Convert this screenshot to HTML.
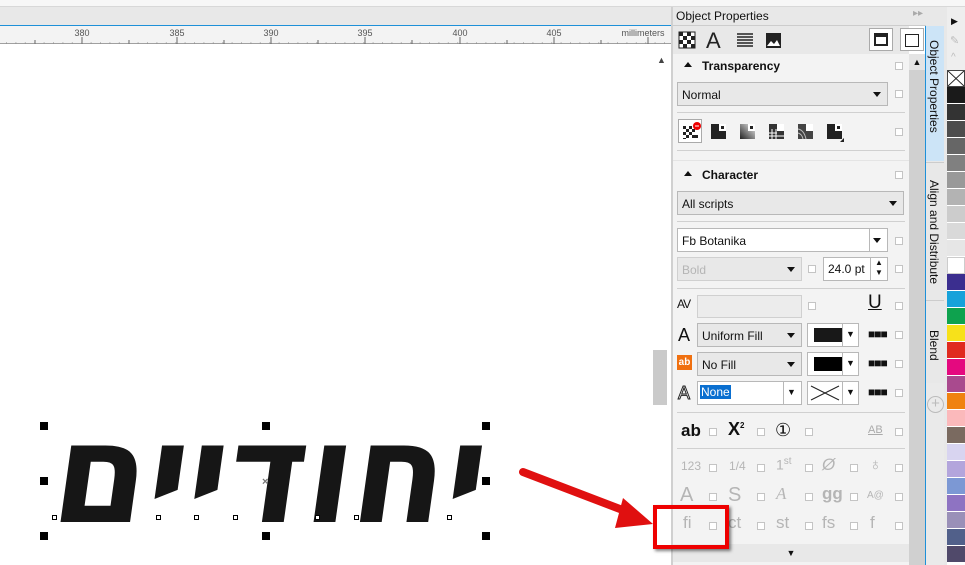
<!DOCTYPE html>
<html><head><meta charset="utf-8"><style>
*{margin:0;padding:0;box-sizing:border-box}
body{width:965px;height:565px;overflow:hidden;background:#fff;font-family:"Liberation Sans",sans-serif;position:relative;font-size:12px;color:#111}
.a{position:absolute}
.dd{position:absolute;background:#e8e8e8;border:1px solid #b8b8b8;font-size:12px;padding:5px 4px 0}
.dd:after{content:"";position:absolute;right:6px;top:9px;border:4px solid transparent;border-top:5px solid #111}
.cb{position:absolute;width:8px;height:8px;border:1px solid #c4c4c4;background:#fff}
.sep{position:absolute;left:677px;width:228px;height:1px;background:#d0d0d0}
.hdr{position:absolute;left:684px;font-weight:bold;font-size:12px}
.hdr:before{content:"";display:inline-block;border:4px solid transparent;border-bottom:5px solid #111;margin-right:10px;vertical-align:3px}
.g{position:absolute;color:#b5b5b5;font-size:17px}
.sw{position:absolute;left:947px;width:18px;height:17px;border-bottom:1px solid #fff}
.h{position:absolute;width:8px;height:8px;background:#000}
.s{position:absolute;width:5px;height:5px;border:1px solid #000;background:#fff}
</style></head><body>
<div class="a" style="left:0;top:0;width:965px;height:7px;background:#f7f7f7;border-bottom:1px solid #d8d8d8"></div>
<div class="a" style="left:0;top:7px;width:672px;height:19px;background:#e8e8e8;border-bottom:1px solid #1e90d8"></div>
<div class="a" style="left:0;top:26px;width:672px;height:18px;background:#f3f3f3;border-bottom:1px solid #a0a0a0"></div>
<svg class="a" style="left:0;top:26px" width="672" height="18">
<g fill="#555" font-size="9" font-family="Liberation Sans" text-anchor="middle">
<text x="82" y="10">380</text><text x="177" y="10">385</text><text x="271" y="10">390</text><text x="365" y="10">395</text><text x="460" y="10">400</text><text x="554" y="10">405</text>
<text x="643" y="10">millimeters</text></g>
<g stroke="#666">
<path d="M82 11V18M177 11V18M271 11V18M365 11V18M460 11V18M554 11V18M648 11V18M35 14V18M129 14V18M224 14V18M318 14V18M412 14V18M507 14V18M601 14V18"/></g>
<g stroke="#888" stroke-dasharray="1 8.4"><path d="M6 17H672"/></g>
</svg>
<div class="a" style="left:653px;top:350px;width:14px;height:55px;background:#cacaca"></div>
<div class="a" style="left:657px;top:55px;font-size:9px;color:#444">▲</div>
<div class="a" style="left:671px;top:7px;width:2px;height:558px;background:#d0d0d0"></div>
<svg class="a" style="left:0;top:410px" width="500" height="150">
<text x="50" y="112" textLength="432" lengthAdjust="spacingAndGlyphs" font-size="140" font-weight="bold" font-family="DejaVu Sans, sans-serif" fill="#161616" transform="skewX(-8) translate(14 0)">יחודיים</text>
</svg>
<div class="h" style="left:40px;top:422px"></div><div class="h" style="left:262px;top:422px"></div><div class="h" style="left:482px;top:422px"></div>
<div class="h" style="left:40px;top:477px"></div><div class="h" style="left:482px;top:477px"></div>
<div class="h" style="left:40px;top:532px"></div><div class="h" style="left:262px;top:532px"></div><div class="h" style="left:482px;top:532px"></div>
<div class="s" style="left:52px;top:515px"></div><div class="s" style="left:156px;top:515px"></div><div class="s" style="left:194px;top:515px"></div><div class="s" style="left:233px;top:515px"></div><div class="s" style="left:315px;top:515px"></div><div class="s" style="left:354px;top:515px"></div><div class="s" style="left:447px;top:515px"></div>
<div class="a" style="left:262px;top:476px;color:#777;font-size:11px;font-weight:bold">×</div>
<svg class="a" style="left:515px;top:462px" width="145" height="75">
<path d="M8 10 L118 52" stroke="#e01010" stroke-width="8" stroke-linecap="round" fill="none"/>
<path d="M108 36 L138 62 L100 66 Z" fill="#e01010"/>
</svg>
<div class="a" style="left:673px;top:7px;width:253px;height:19px;background:#e8e8e8;border-bottom:1px solid #ccc"></div>
<div class="a" style="left:676px;top:9px;font-size:12px">Object Properties</div>
<div class="a" style="left:913px;top:8px;color:#aaa;font-size:10px">▸▸</div>
<div class="a" style="left:931px;top:7px;color:#aaa;font-size:13px">✕</div>
<div class="a" style="left:673px;top:26px;width:236px;height:28px;background:#e8e8e8"></div>
<svg class="a" style="left:678px;top:30px" width="110" height="20">
<g fill="#222"><rect x="1" y="2" width="16" height="16" fill="#fff" stroke="#222"/>
<path d="M1 2h4v4H1zM9 2h4v4H9zM5 6h4v4H5zM13 6h4v4h-4zM1 10h4v4H1zM9 10h4v4H9zM5 14h4v4H5zM13 14h4v4h-4z"/></g>
<text x="28" y="18" font-size="22" font-family="Liberation Sans" fill="#222">A</text>
<g stroke="#222" stroke-width="1.5"><path d="M59 4h16M59 7h16M59 10h16M59 13h16M59 16h16"/></g>
<rect x="88" y="3" width="15" height="15" fill="#222"/><path d="M89 16l4-5 3 3 3-4 3 6z" fill="#fff"/>
</svg>
<div class="a" style="left:869px;top:28px;width:24px;height:23px;background:#fff;border:1px solid #aaa"><div style="margin:4px;width:14px;height:13px;border:2px solid #222;border-top-width:4px"></div></div>
<div class="a" style="left:900px;top:28px;width:24px;height:23px;background:#fff;border:1px solid #aaa"><div style="margin:5px 4px;width:14px;height:13px;border:1.5px solid #222"></div></div>
<div class="a" style="left:673px;top:54px;width:236px;height:511px;background:#f3f3f3"></div>
<div class="a" style="left:909px;top:54px;width:16px;height:511px;background:#d0d0d0"></div>
<div class="a" style="left:909px;top:54px;width:16px;height:16px;background:#e4e4e4;font-size:9px;text-align:center;line-height:16px">▲</div>
<div class="a" style="left:925px;top:26px;width:1px;height:539px;background:#1e90d8"></div>
<div class="hdr" style="top:58px">Transparency</div><div class="cb" style="left:895px;top:62px"></div>
<div class="dd" style="left:677px;top:82px;width:211px;height:24px">Normal</div><div class="cb" style="left:895px;top:90px"></div>
<div class="sep" style="top:112px"></div>
<div class="a" style="left:678px;top:119px;width:24px;height:24px;background:#fff;border:1px solid #aaa"></div>
<svg class="a" style="left:680px;top:121px" width="180" height="22">
<g fill="#222"><path d="M3 5h3v3H3zM9 5h3v3H9zM6 8h3v3H6zM12 8h3v3h-3zM3 11h3v3H3zM9 11h3v3H9zM6 14h3v3H6zM12 14h3v3h-3zM15 14h3v3h-3zM3 17h3v1H3z"/></g>
<circle cx="17" cy="5" r="4" fill="#e00"/><path d="M15 5h4" stroke="#fff"/>
<path d="M31 3h15v15H31z" fill="#222"/><path d="M39 3h7v7h-7z" fill="#fff"/><path d="M41 5h3v3h-3z" fill="#222"/>
<defs><linearGradient id="gr" x1="0" y1="1" x2="1" y2="0"><stop offset="0" stop-color="#222"/><stop offset="1" stop-color="#eee"/></linearGradient></defs>
<path d="M60 3h15v15H60z" fill="url(#gr)"/><path d="M68 3h7v7h-7z" fill="#fff"/><path d="M70 5h3v3h-3z" fill="#222"/>
<path d="M89 3h15v15H89z" fill="#333"/><path d="M97 3h7v7h-7z" fill="#fff"/><g stroke="#fff"><path d="M89 12h8M89 15h15M92 8v10M96 8v10"/></g>
<path d="M118 3h15v15h-15z" fill="#444"/><path d="M126 3h7v7h-7z" fill="#fff"/><g stroke="#bbb" fill="none"><path d="M118 8q6 1 8 10M118 12q4 1 5 6"/></g>
<path d="M147 3h15v15h-15z" fill="#222"/><path d="M155 3h7v7h-7z" fill="#fff"/><path d="M157 5h3v3h-3z" fill="#222"/><path d="M160 21l4-4v4z" fill="#222"/>
</svg>
<div class="cb" style="left:895px;top:128px"></div>
<div class="sep" style="top:150px"></div>
<div class="a" style="left:673px;top:160px;width:236px;height:1px;background:#e4e4e4"></div>
<div class="hdr" style="top:167px">Character</div><div class="cb" style="left:895px;top:171px"></div>
<div class="dd" style="left:677px;top:191px;width:227px;height:24px">All scripts</div>
<div class="sep" style="top:221px"></div>
<div class="dd" style="left:677px;top:228px;width:211px;height:24px;background:#fff">Fb Botanika</div>
<div class="a" style="left:869px;top:229px;width:1px;height:22px;background:#b8b8b8"></div><div class="cb" style="left:895px;top:237px"></div>
<div class="dd" style="left:677px;top:257px;width:125px;height:24px;color:#b5b5b5;border-color:#d0d0d0">Bold</div>
<div class="cb" style="left:808px;top:265px"></div>
<div class="a" style="left:823px;top:257px;width:65px;height:24px;background:#fff;border:1px solid #b8b8b8;padding:4px 4px">24.0 pt</div>
<div class="a" style="left:870px;top:258px;width:1px;height:22px;background:#b8b8b8"></div>
<div class="a" style="left:875px;top:258px;font-size:8px;line-height:10px">▲<br>▼</div>
<div class="cb" style="left:895px;top:265px"></div>
<div class="sep" style="top:288px"></div>
<div class="a" style="left:677px;top:297px;font-size:12px;letter-spacing:-1px">AV</div>
<div class="a" style="left:697px;top:295px;width:105px;height:23px;background:#ececec;border:1px solid #d0d0d0"></div>
<div class="cb" style="left:808px;top:302px"></div>
<div class="a" style="left:868px;top:292px;font-size:19px;text-decoration:underline">U</div>
<div class="cb" style="left:895px;top:302px"></div>
<div class="a" style="left:678px;top:325px;font-size:18px">A</div>
<div class="dd" style="left:697px;top:323px;width:105px;height:24px">Uniform Fill</div>
<div class="a" style="left:807px;top:323px;width:52px;height:24px;background:#fff;border:1px solid #b8b8b8"><div style="margin:4px 6px;width:28px;height:14px;background:#181818"></div></div>
<div class="a" style="left:842px;top:324px;width:1px;height:22px;background:#b8b8b8"></div>
<div class="a" style="left:846px;top:329px;font-size:9px">▼</div>
<div class="a" style="left:868px;top:327px;font-weight:bold;letter-spacing:-1px">■■■</div><div class="cb" style="left:895px;top:331px"></div>
<div class="a" style="left:677px;top:355px;width:15px;height:15px;background:#f07010;color:#fff;font-size:10px;font-weight:bold;line-height:15px;text-align:center">ab</div>
<div class="dd" style="left:697px;top:352px;width:105px;height:24px">No Fill</div>
<div class="a" style="left:807px;top:352px;width:52px;height:24px;background:#fff;border:1px solid #b8b8b8"><div style="margin:4px 6px;width:28px;height:14px;background:#000"></div></div>
<div class="a" style="left:842px;top:353px;width:1px;height:22px;background:#b8b8b8"></div>
<div class="a" style="left:846px;top:358px;font-size:9px">▼</div>
<div class="a" style="left:868px;top:356px;font-weight:bold;letter-spacing:-1px">■■■</div><div class="cb" style="left:895px;top:360px"></div>
<div class="a" style="left:678px;top:383px;font-size:18px;color:#fff;-webkit-text-stroke:1px #222">A</div>
<div class="a" style="left:697px;top:381px;width:105px;height:24px;background:#fff;border:1px solid #b8b8b8"></div>
<div class="a" style="left:700px;top:385px;background:#0a6fd0;color:#fff;padding:0 1px">None</div>
<div class="a" style="left:783px;top:382px;width:1px;height:22px;background:#b8b8b8"></div>
<div class="a" style="left:787px;top:387px;font-size:9px">▼</div>
<div class="a" style="left:807px;top:381px;width:52px;height:24px;background:#fff;border:1px solid #b8b8b8"><svg width="34" height="22"><path d="M3 4L31 18M3 18L31 4" stroke="#222"/></svg></div>
<div class="a" style="left:842px;top:382px;width:1px;height:22px;background:#b8b8b8"></div>
<div class="a" style="left:846px;top:387px;font-size:9px">▼</div>
<div class="a" style="left:868px;top:385px;font-weight:bold;letter-spacing:-1px">■■■</div><div class="cb" style="left:895px;top:389px"></div>
<div class="sep" style="top:412px"></div>
<div class="a" style="left:681px;top:421px;font-size:17px;font-weight:bold">ab</div><div class="cb" style="left:709px;top:428px"></div>
<div class="a" style="left:728px;top:419px;font-size:18px;font-weight:bold">X<sup style="font-size:8px">2</sup></div><div class="cb" style="left:757px;top:428px"></div>
<div class="a" style="left:775px;top:420px;font-size:18px">①</div><div class="cb" style="left:805px;top:428px"></div>
<div class="a" style="left:868px;top:424px;font-size:11px;color:#aaa;text-decoration:underline">AB</div><div class="cb" style="left:895px;top:428px"></div>
<div class="sep" style="top:448px"></div>
<div class="g" style="left:681px;top:459px;font-size:12px">123</div><div class="cb" style="left:709px;top:464px"></div>
<div class="g" style="left:729px;top:459px;font-size:12px">1/4</div><div class="cb" style="left:757px;top:464px"></div>
<div class="g" style="left:776px;top:456px;font-size:14px">1<sup style="font-size:10px">st</sup></div><div class="cb" style="left:805px;top:464px"></div>
<div class="g" style="left:822px;top:455px;font-style:italic">Ø</div><div class="cb" style="left:850px;top:464px"></div>
<div class="g" style="left:869px;top:455px">♁</div><div class="cb" style="left:895px;top:464px"></div>
<div class="g" style="left:680px;top:484px;font-size:20px">A</div><div class="cb" style="left:709px;top:493px"></div>
<div class="g" style="left:728px;top:484px;font-size:20px">S</div><div class="cb" style="left:757px;top:493px"></div>
<div class="g" style="left:776px;top:484px;font-style:italic;font-family:'Liberation Serif'">A</div><div class="cb" style="left:805px;top:493px"></div>
<div class="g" style="left:822px;top:484px;font-weight:bold">gg</div><div class="cb" style="left:850px;top:493px"></div>
<div class="g" style="left:867px;top:490px;font-size:10px">A@</div><div class="cb" style="left:895px;top:493px"></div>
<div class="g" style="left:683px;top:513px">fi</div><div class="cb" style="left:709px;top:522px"></div>
<div class="g" style="left:728px;top:513px">ct</div><div class="cb" style="left:757px;top:522px"></div>
<div class="g" style="left:776px;top:513px">st</div><div class="cb" style="left:805px;top:522px"></div>
<div class="g" style="left:822px;top:513px">fs</div><div class="cb" style="left:850px;top:522px"></div>
<div class="g" style="left:870px;top:513px">f</div><div class="cb" style="left:895px;top:522px"></div>
<div class="a" style="left:673px;top:544px;width:236px;height:18px;background:#e8e8e8;text-align:center;font-size:9px;line-height:18px">▼</div>
<div class="a" style="left:653px;top:505px;width:76px;height:44px;border:4px solid #ee0000;box-shadow:2px 2px 3px rgba(0,0,0,.5)"></div>
<div class="a" style="left:926px;top:7px;width:21px;height:558px;background:#e8e8e8"></div>
<div class="a" style="left:926px;top:26px;width:18px;height:135px;background:#cce4f7"></div>
<div class="a" style="left:927px;top:40px;writing-mode:vertical-rl;font-size:12px">Object Properties</div>
<div class="a" style="left:926px;top:162px;width:18px;height:1px;background:#ccc"></div>
<div class="a" style="left:927px;top:180px;writing-mode:vertical-rl;font-size:12px">Align and Distribute</div>
<div class="a" style="left:926px;top:300px;width:18px;height:1px;background:#ccc"></div>
<div class="a" style="left:927px;top:330px;writing-mode:vertical-rl;font-size:12px">Blend</div>
<div class="a" style="left:926px;top:383px;width:18px;height:182px;background:#eaeaea"></div>
<div class="a" style="left:927px;top:396px;width:17px;height:17px;border:1.5px solid #bbb;border-radius:50%;color:#bbb;text-align:center;line-height:14px;font-size:15px">+</div>
<div class="a" style="left:947px;top:7px;width:18px;height:63px;background:#eee"></div>
<div class="a" style="left:951px;top:16px;font-size:9px">▶</div>
<div class="a" style="left:950px;top:34px;color:#bbb;font-size:11px">✎</div>
<div class="a" style="left:951px;top:52px;color:#bbb;font-size:10px">^</div>
<div class="sw" style="top:70px;background:#fff;border:1px solid #444"><svg width="16" height="15"><path d="M0 0L16 15M16 0L0 15" stroke="#222"/></svg></div>
<div class="sw" style="top:87px;background:#1a1a1a"></div><div class="sw" style="top:104px;background:#333"></div>
<div class="sw" style="top:121px;background:#4d4d4d"></div><div class="sw" style="top:138px;background:#666"></div>
<div class="sw" style="top:155px;background:#808080"></div><div class="sw" style="top:172px;background:#999"></div>
<div class="sw" style="top:189px;background:#b3b3b3"></div><div class="sw" style="top:206px;background:#ccc"></div>
<div class="sw" style="top:223px;background:#d9d9d9"></div><div class="sw" style="top:240px;background:#e6e6e6"></div>
<div class="sw" style="top:257px;background:#fff;border:1px solid #ccc"></div><div class="sw" style="top:274px;background:#3b2e8f"></div>
<div class="sw" style="top:291px;background:#16a2da"></div><div class="sw" style="top:308px;background:#0ea24e"></div>
<div class="sw" style="top:325px;background:#f7e11a"></div><div class="sw" style="top:342px;background:#e02a1f"></div>
<div class="sw" style="top:359px;background:#e4097f"></div><div class="sw" style="top:376px;background:#a94a8e"></div>
<div class="sw" style="top:393px;background:#f08210"></div><div class="sw" style="top:410px;background:#fbb9bb"></div>
<div class="sw" style="top:427px;background:#7a6a60"></div><div class="sw" style="top:444px;background:#d8d4f0"></div>
<div class="sw" style="top:461px;background:#b3a5dc"></div><div class="sw" style="top:478px;background:#7c98d4"></div>
<div class="sw" style="top:495px;background:#8e73c2"></div><div class="sw" style="top:512px;background:#9a90b8"></div>
<div class="sw" style="top:529px;background:#51608a"></div><div class="sw" style="top:546px;background:#50496a"></div>
</body></html>
